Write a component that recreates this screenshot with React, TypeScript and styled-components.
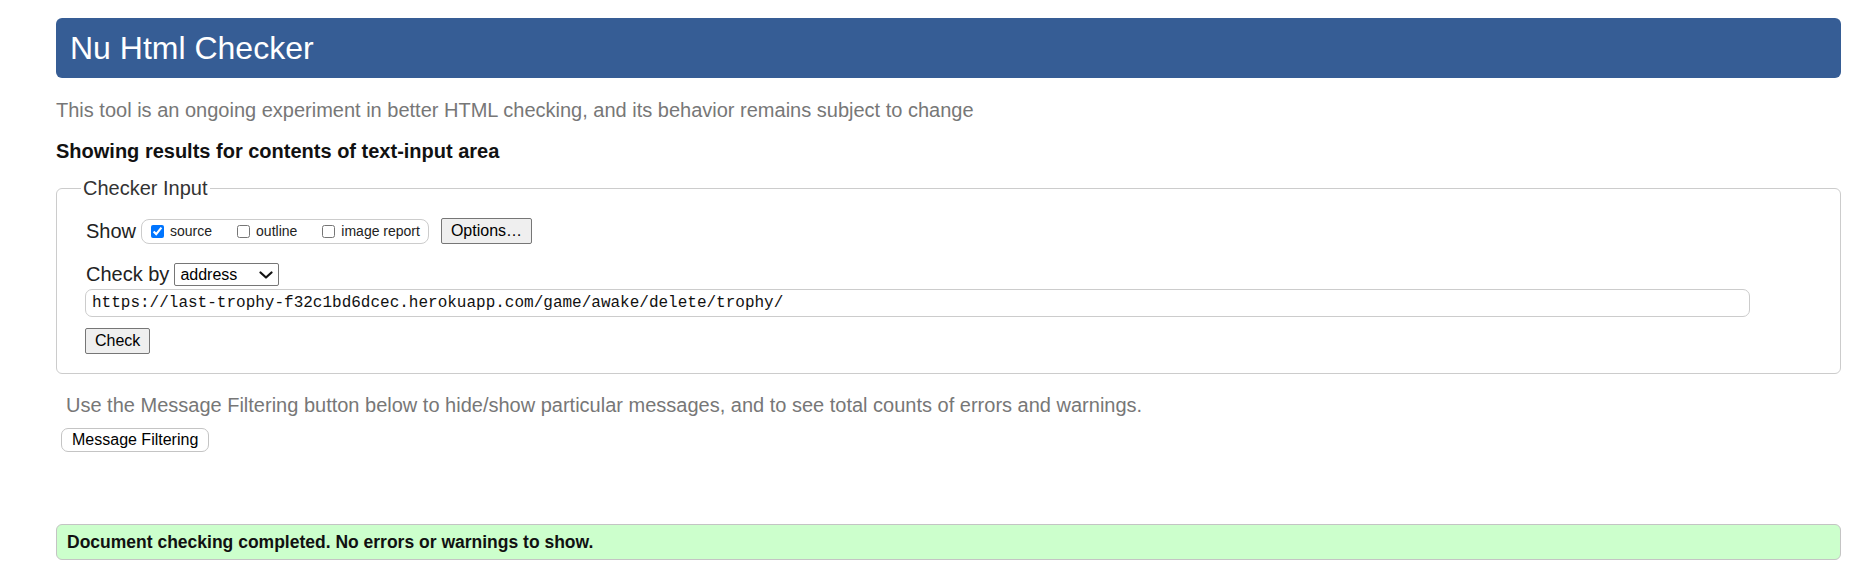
import React from "react";
import styled, { createGlobalStyle } from "styled-components";

const Global = createGlobalStyle`
  html, body { margin: 0; padding: 0; background: #fff; }
  body { font-family: "Liberation Sans", Arial, sans-serif; color: #111; }
`;

const Page = styled.div`
  padding: 18px 25px 18px 56px;
  display: flex;
  flex-direction: column;
  align-items: flex-start;
`;

const Header = styled.header`
  align-self: stretch;
  height: 60px;
  background: #365d95;
  border-radius: 6px;
  display: flex;
  align-items: center;
  padding-left: 14px;
`;

const Title = styled.h1`
  margin: 0;
  font-size: 32px;
  font-weight: normal;
  color: #fff;
  line-height: 1.15;
`;

const Lead = styled.p<{ $indent?: number; $top: number }>`
  margin: ${(p) => p.$top}px 0 0 ${(p) => p.$indent ?? 0}px;
  font-size: 20px;
  line-height: 23px;
  color: #777;
`;

const Heading = styled.h2`
  margin: 18px 0 0;
  font-size: 20px;
  font-weight: bold;
  line-height: 23px;
  color: #111;
`;

const Fieldset = styled.fieldset`
  align-self: stretch;
  margin: 14px 0 0;
  border: 1px solid #ccc;
  border-radius: 6px;
  padding: 18px 28px 19px 28px;
  display: flex;
  flex-direction: column;
  align-items: flex-start;
  min-width: 0;
`;

const Legend = styled.legend`
  font-size: 20px;
  line-height: 23px;
  color: #333;
  padding: 0 2px;
  margin-left: -4px;
`;

const Row = styled.div<{ $top?: number }>`
  display: flex;
  align-items: center;
  height: 26px;
  margin-top: ${(p) => p.$top ?? 0}px;
`;

const Label = styled.span`
  font-size: 20px;
  line-height: 23px;
  color: #222;
  padding-left: 1px;
`;

const Group = styled.div`
  display: flex;
  align-items: center;
  height: 23px;
  margin-left: 5px;
  padding: 0 8px 0 9px;
  border: 1px solid #ccc;
  border-radius: 8px;
  gap: 25px;
`;

const Option = styled.label`
  display: flex;
  align-items: center;
  font-size: 14px;
  color: #222;
  gap: 6px;
`;

const Box = styled.input`
  width: 13px;
  height: 13px;
  margin: 0;
  accent-color: #0075ff;
`;

const Button = styled.button<{ $soft?: boolean }>`
  font-family: "Liberation Sans", Arial, sans-serif;
  font-size: 16px;
  line-height: 18px;
  color: #000;
  background: ${(p) => (p.$soft ? "#fff" : "#efefef")};
  border: 1px solid ${(p) => (p.$soft ? "#c4c4c4" : "#767676")};
  border-radius: ${(p) => (p.$soft ? "7px" : "2px")};
  padding: ${(p) => (p.$soft ? "2px 10px" : "3px 9px")};
`;

const OptionsButton = styled(Button)`
  margin-left: 12px;
`;

const SelectWrap = styled.div`
  position: relative;
  margin-left: 5px;
  width: 105px;
  height: 23px;
`;

const Select = styled.select`
  appearance: none;
  width: 100%;
  height: 100%;
  box-sizing: border-box;
  border: 1px solid #767676;
  border-radius: 2px;
  background: #fff;
  font-family: "Liberation Sans", Arial, sans-serif;
  font-size: 16px;
  color: #000;
  padding: 0 0 0 5px;
`;

const Chevron = styled.svg`
  position: absolute;
  right: 6px;
  top: 8px;
  pointer-events: none;
`;

const UrlInput = styled.input`
  margin-top: 2px;
  width: 1665px;
  height: 28px;
  box-sizing: border-box;
  border: 1px solid #ccc;
  border-radius: 7px;
  padding: 0 6px;
  font-family: "Liberation Mono", "DejaVu Sans Mono", monospace;
  font-size: 16px;
  color: #111;
`;

const CheckButton = styled(Button)`
  margin-top: 11px;
`;

const FilterButton = styled(Button)`
  margin: 11px 0 0 5px;
`;

const Success = styled.div`
  align-self: stretch;
  margin-top: 72px;
  background: #ccffcc;
  border: 1px solid #c4c4c4;
  border-radius: 6px;
  padding: 7px 11px 6px 10px;
  font-size: 17.5px;
  line-height: 21px;
  font-weight: bold;
  color: #111;
`;

export default function App() {
  return (
    <>
      <Global />
      <Page>
        <Header>
          <Title>Nu Html Checker</Title>
        </Header>
        <Lead $top={21}>
          This tool is an ongoing experiment in better HTML checking, and its behavior remains subject to change
        </Lead>
        <Heading>Showing results for contents of text-input area</Heading>
        <Fieldset>
          <Legend>Checker Input</Legend>
          <Row>
            <Label>Show</Label>
            <Group>
              <Option>
                <Box type="checkbox" defaultChecked />
                source
              </Option>
              <Option>
                <Box type="checkbox" />
                outline
              </Option>
              <Option>
                <Box type="checkbox" />
                image report
              </Option>
            </Group>
            <OptionsButton>Options…</OptionsButton>
          </Row>
          <Row $top={17}>
            <Label>Check by</Label>
            <SelectWrap>
              <Select defaultValue="address">
                <option value="address">address</option>
                <option value="file">file upload</option>
                <option value="text">text input</option>
              </Select>
              <Chevron width="14" height="8" viewBox="0 0 14 8">
                <path d="M1.5 1.5 L7 6.5 L12.5 1.5" fill="none" stroke="#111" strokeWidth="2.2" strokeLinecap="round" strokeLinejoin="round" />
              </Chevron>
            </SelectWrap>
          </Row>
          <UrlInput
            type="text"
            defaultValue="https://last-trophy-f32c1bd6dcec.herokuapp.com/game/awake/delete/trophy/"
          />
          <CheckButton>Check</CheckButton>
        </Fieldset>
        <Lead $top={20} $indent={10}>
          Use the Message Filtering button below to hide/show particular messages, and to see total counts of errors and warnings.
        </Lead>
        <FilterButton $soft>Message Filtering</FilterButton>
        <Success>Document checking completed. No errors or warnings to show.</Success>
      </Page>
    </>
  );
}
